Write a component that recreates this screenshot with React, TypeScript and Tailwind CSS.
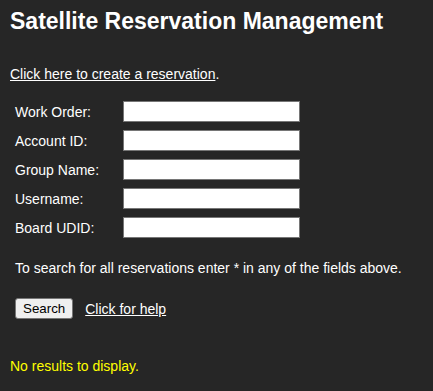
const FIELDS = ["Work Order:", "Account ID:", "Group Name:", "Username:", "Board UDID:"];

export default function App() {
  return (
    <div
      className="min-h-screen bg-[#262626] px-[10px] pt-[8px] text-white"
      style={{ fontFamily: '"Liberation Sans", Arial, sans-serif' }}
    >
      <h1 className="text-[23px] leading-[27px] font-bold">Satellite Reservation Management</h1>

      <p className="mt-[31px] text-[14px] leading-[16px]">
        <a href="#" className="underline">
          Click here to create a reservation
        </a>
        .
      </p>

      <div className="mt-[19px] flex flex-col gap-[8px] pl-[5px]">
        {FIELDS.map((f) => (
          <div key={f} className="flex h-[21px] items-center">
            <label className="w-[108px] text-[14px] leading-[16px]">{f}</label>
            <input
              type="text"
              className="h-[21px] w-[177px] border border-[#767676] bg-white px-[2px] text-[13px] text-black outline-none"
            />
          </div>
        ))}
      </div>

      <p className="mt-[22px] pl-[5px] text-[14px] leading-[16px]">
        To search for all reservations enter * in any of the fields above.
      </p>

      <div className="mt-[22px] flex items-center pl-[5px]">
        <button
          type="button"
          className="h-[21px] rounded-[3px] border border-[#767676] bg-[#efefef] px-[7px] text-[13.333px] leading-[15px] text-black"
        >
          Search
        </button>
        <a href="#" className="ml-[12px] text-[14px] leading-[16px] underline">
          Click for help
        </a>
      </div>

      <p className="mt-[39px] text-[14px] leading-[16px] text-[#ffff00]">No results to display.</p>
    </div>
  );
}
